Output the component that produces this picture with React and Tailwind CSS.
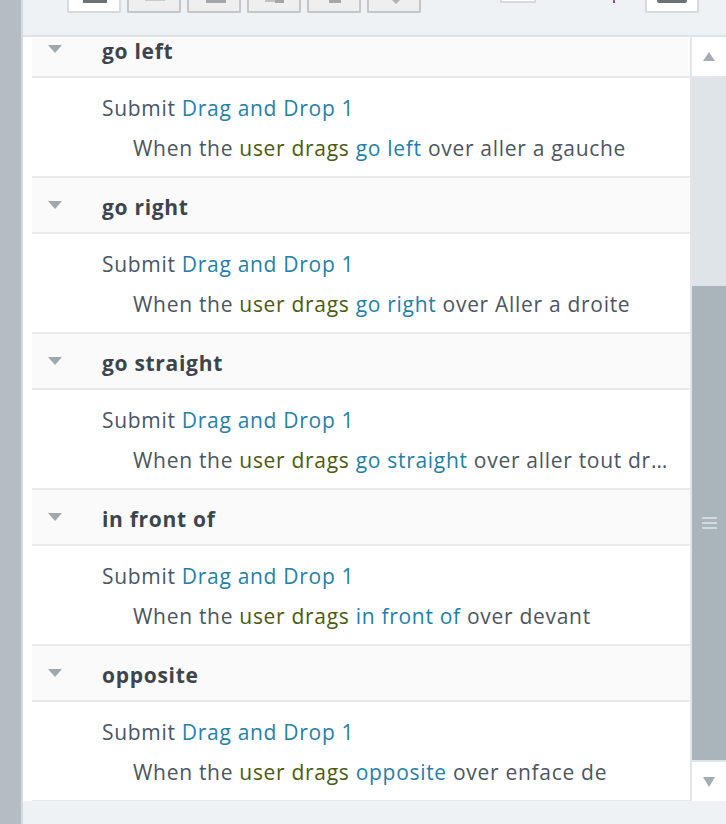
import React from "react";

const groups = [
  { title: "go left", target: "aller a gauche" },
  { title: "go right", target: "Aller a droite" },
  { title: "go straight", target: "aller tout droit" },
  { title: "in front of", target: "devant" },
  { title: "opposite", target: "enface de" },
];

const ToolButton = ({ active, children }) => (
  <div
    className={`relative h-[13px] w-[54px] rounded-b-[2px] border-2 border-t-0 ${
      active ? "border-[#d6dadd] bg-white" : "border-[#c4c6c8] bg-[#efefef]"
    }`}
  >
    {children}
  </div>
);

const Group = ({ title, target }) => (
  <div>
    <div className="flex h-[56px] items-center border-t-2 border-[#e8eaec] bg-[#fafafa]">
      <svg width="14" height="8" viewBox="0 0 14 8" className="ml-[16px] mr-[40px]">
        <path d="M0 0 L14 0 L7 8 Z" fill="#9ea8ae" />
      </svg>
      <span className="pt-[5px] text-[21px] font-bold tracking-[0.7px] text-[#3d454c]">{title}</span>
    </div>
    <div className="h-[100px] border-t-2 border-[#e8eaec] bg-white pr-[22px] text-[21px] tracking-[0.7px] text-[#4d5560]">
      <div className="pl-[70px] pt-[15px] leading-[30px]">
        Submit <span className="text-[#1f80aa]">Drag and Drop 1</span>
      </div>
      <div className="truncate pl-[101px] pt-[10px] leading-[30px]">
        When the <span className="text-[#4b5a10]">user drags</span>{" "}
        <span className="text-[#1f80aa]">{title}</span> over {target}
      </div>
    </div>
  </div>
);

export default function App() {
  return (
    <div
      className="flex h-[824px] w-[726px] overflow-hidden bg-[#eef2f5]"
      style={{ fontFamily: '"Open Sans", "Noto Sans", sans-serif' }}
    >
      <div className="w-[21px] shrink-0 bg-[#b3bdc3]" />
      <div className="w-[2px] shrink-0 bg-[#d4dadd]" />
      <div className="flex min-w-0 flex-1 flex-col">
        {/* toolbar */}
        <div className="flex h-[37px] shrink-0 items-start border-b-2 border-[#dde3e8]">
          <div className="ml-[44px] flex gap-[6px]">
            <ToolButton active>
              <div className="absolute left-[14px] top-0 h-[3px] w-[24px] bg-[#6b7278]" />
            </ToolButton>
            <ToolButton>
              <div className="absolute left-[16px] top-0 h-[1px] w-[20px] bg-[#c8cacc]" />
            </ToolButton>
            <ToolButton>
              <div className="absolute left-[17px] top-0 h-[3px] w-[20px] bg-[#a4a6a8]" />
            </ToolButton>
            <ToolButton>
              <div className="absolute left-[16px] top-0 h-[2px] w-[14px] bg-[#c0c2c4]" />
              <div className="absolute left-[26px] top-0 h-[3px] w-[9px] bg-[#a4a6a8]" />
            </ToolButton>
            <ToolButton>
              <div className="absolute left-[20px] top-0 h-[3px] w-[12px] bg-[#a4a6a8]" />
            </ToolButton>
            <ToolButton>
              <div className="absolute left-[23px] top-0 h-0 w-0 border-x-[4px] border-t-[4px] border-x-transparent border-t-[#b0b2b4]" />
            </ToolButton>
          </div>
          <div className="ml-[79px] h-[3px] w-[36px] border-2 border-t-0 border-[#d6dadd] bg-white" />
          <div className="ml-[77px] flex h-[3px] w-[2px] flex-col">
            <div className="h-[1px] bg-[#d05050]" />
            <div className="h-[2px] bg-[#5060c0]" />
          </div>
          <div className="relative ml-[30px] h-[13px] w-[54px] rounded-b-[2px] border-2 border-t-0 border-[#d6dadd] bg-white">
            <div className="absolute left-[10px] top-0 h-[3px] w-[30px] rounded-b-[2px] bg-[#6b7278]" />
          </div>
        </div>
        {/* list + scrollbar */}
        <div className="flex h-[764px] shrink-0">
          <div className="min-w-0 flex-1 overflow-hidden bg-white">
            <div className="-mt-[17px] ml-[9px]">
              {groups.map((g) => (
                <Group key={g.title} {...g} />
              ))}
              <div className="h-[2px] bg-[#e8eaec]" />
            </div>
          </div>
          <div className="flex w-[36px] shrink-0 flex-col border-l-2 border-[#e2e6e9] bg-[#dfe4e8]">
            <div className="flex h-[41px] items-center justify-center border-b-2 border-[#e2e6e9] bg-white">
              <svg width="12" height="9" viewBox="0 0 12 9">
                <path d="M0 9 L12 9 L6 0 Z" fill="#a3adb3" />
              </svg>
            </div>
            <div className="h-[208px]" />
            <div className="flex flex-1 flex-col items-center justify-center bg-[#a9b4bb]">
              <div className="flex w-[15px] flex-col gap-[3px]">
                <div className="h-[2px] bg-[#d3d9dc]" />
                <div className="h-[2px] bg-[#d3d9dc]" />
                <div className="h-[2px] bg-[#d3d9dc]" />
              </div>
            </div>
            <div className="flex h-[41px] items-center justify-center border-t-2 border-[#e2e6e9] bg-white">
              <svg width="12" height="10" viewBox="0 0 12 10">
                <path d="M0 0 L12 0 L6 10 Z" fill="#a3adb3" />
              </svg>
            </div>
          </div>
        </div>
      </div>
    </div>
  );
}
